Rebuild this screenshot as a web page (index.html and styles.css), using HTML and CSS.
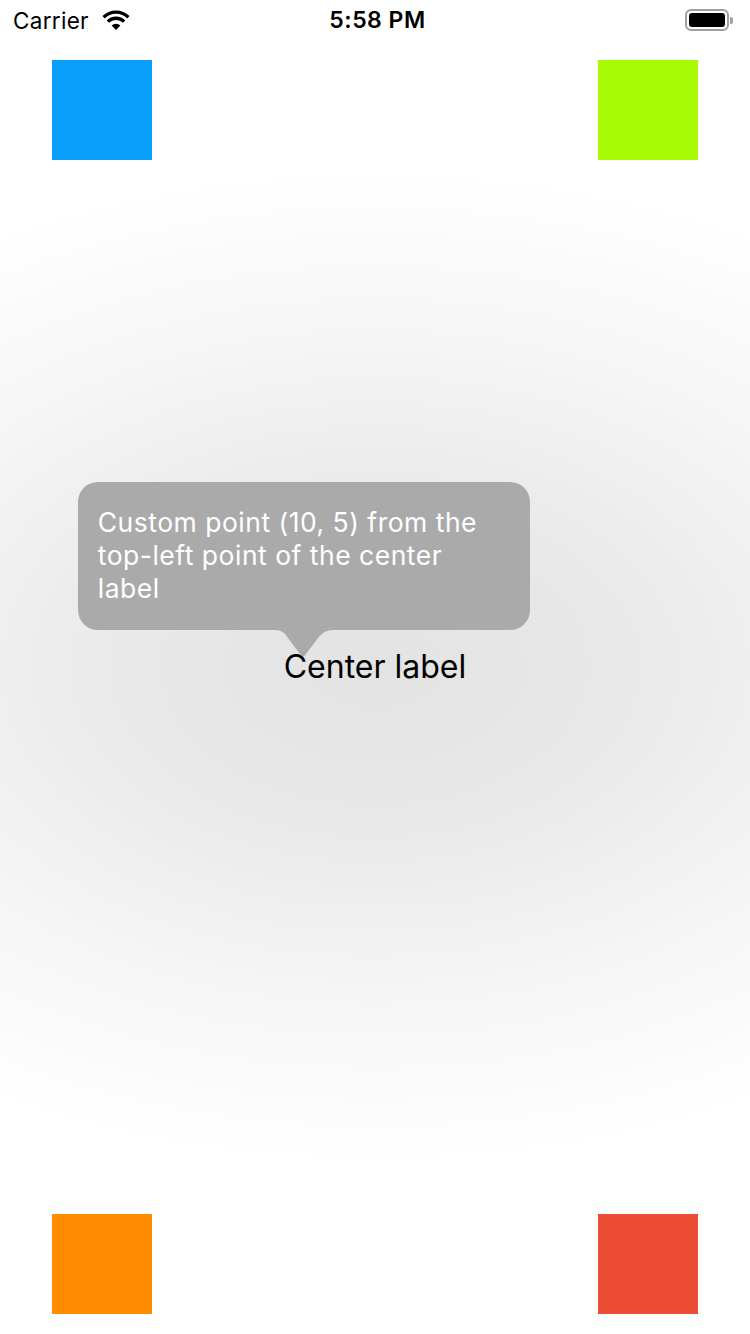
FILE: index.html
```html
<!DOCTYPE html>
<html>
<head>
<meta charset="utf-8">
<link rel="stylesheet" href="styles.css">
</head>
<body>
<div class="page">
  <div class="statusbar">
    <div class="sb-left">
      <span class="carrier">Carrier</span>
      <svg class="wifi" width="30" height="22" viewBox="0 0 30 22">
        <path d="M15 21 L10.6 16.4 A6.4 6.4 0 0 1 19.4 16.4 Z" fill="#000"/>
        <path d="M6.8 12.6 A11.6 11.6 0 0 1 23.2 12.6" stroke="#000" stroke-width="3.4" fill="none"/>
        <path d="M2.6 8.2 A17.6 17.6 0 0 1 27.4 8.2" stroke="#000" stroke-width="3.4" fill="none"/>
      </svg>
    </div>
    <div class="sb-time">5:58 PM</div>
    <div class="sb-right">
      <div class="battery"><div class="battery-fill"></div></div>
      <div class="battery-nub"></div>
    </div>
  </div>
  <div class="row">
    <div class="sq blue"></div>
    <div class="sq green"></div>
  </div>
  <div class="middle">
    <div class="center-wrap">
      <div class="tip">
        <p class="tip-text">Custom point (10, 5) from the top-left point of the center label</p>
        <svg class="tip-arrow" width="60" height="28" viewBox="0 0 60 28">
          <path d="M0 0 L60 0 C52 0 48 3 44 8 L32 24 C30 27 28 27 26 24 L14 8 C11 3 8 0 0 0 Z" fill="#aaaaaa"/>
        </svg>
      </div>
      <span class="center-label">Center label</span>
    </div>
  </div>
  <div class="row bottom">
    <div class="sq orange"></div>
    <div class="sq red"></div>
  </div>
</div>
</body>
</html>
```

FILE: styles.css
```css
html, body {
  margin: 0;
  padding: 0;
}
body {
  width: 750px;
  height: 1334px;
  overflow: hidden;
  font-family: Inter, "Liberation Sans", sans-serif;
  background: #ffffff;
}
.page {
  width: 750px;
  height: 1334px;
  display: flex;
  flex-direction: column;
  background: radial-gradient(ellipse 780px 500px at 375px 667px, rgba(0,0,0,0.11) 0%, rgba(0,0,0,0.09) 30%, rgba(0,0,0,0.04) 65%, rgba(0,0,0,0) 100%);
}
.statusbar {
  height: 40px;
  display: flex;
  align-items: center;
  justify-content: space-between;
  padding: 0 17px 0 13px;
  position: relative;
}
.sb-left {
  display: flex;
  align-items: center;
  gap: 12px;
}
.carrier {
  font-size: 22.5px;
  color: #000;
  letter-spacing: 0.3px;
}
.wifi {
  display: block;
  margin-top: -1px;
}
.sb-time {
  position: absolute;
  left: 0;
  right: 0;
  text-align: center;
  font-size: 23px;
  font-weight: 600;
  color: #000;
  letter-spacing: 0.5px;
  padding-left: 5px;
  pointer-events: none;
}
.sb-right {
  display: flex;
  align-items: center;
  gap: 1px;
}
.battery {
  width: 36px;
  height: 14px;
  border: 2px solid #a0a0a0;
  border-radius: 6px;
  padding: 2px;
}
.battery-fill {
  width: 100%;
  height: 100%;
  background: #000;
  border-radius: 3px;
}
.battery-nub {
  width: 3px;
  height: 7px;
  background: #a0a0a0;
  border-radius: 0 2px 2px 0;
}
.row {
  display: flex;
  justify-content: space-between;
  padding: 20px 52px 0;
}
.row.bottom {
  padding: 0 52px 20px;
}
.sq {
  width: 100px;
  height: 100px;
}
.blue { background: #0a9ffd; }
.green { background: #a7fb05; }
.orange { background: #fe8b00; }
.red { background: #ec4b34; }
.middle {
  flex: 1;
  display: flex;
  align-items: center;
  justify-content: center;
  padding-bottom: 40px;
}
.center-wrap {
  position: relative;
  display: flex;
}
.center-label {
  font-size: 32px;
  color: #000;
  line-height: 38px;
}
.tip {
  position: absolute;
  left: -206px;
  bottom: 56px;
  width: 452px;
  box-sizing: border-box;
  background: #aaaaaa;
  border-radius: 20px;
  padding: 24px 44px 25px 20px;
}
.tip-text {
  margin: 0;
  color: #fff;
  font-size: 26.5px;
  letter-spacing: 0.5px;
  line-height: 33px;
}
.tip-arrow {
  position: absolute;
  left: 196px;
  top: 100%;
  display: block;
}
```
